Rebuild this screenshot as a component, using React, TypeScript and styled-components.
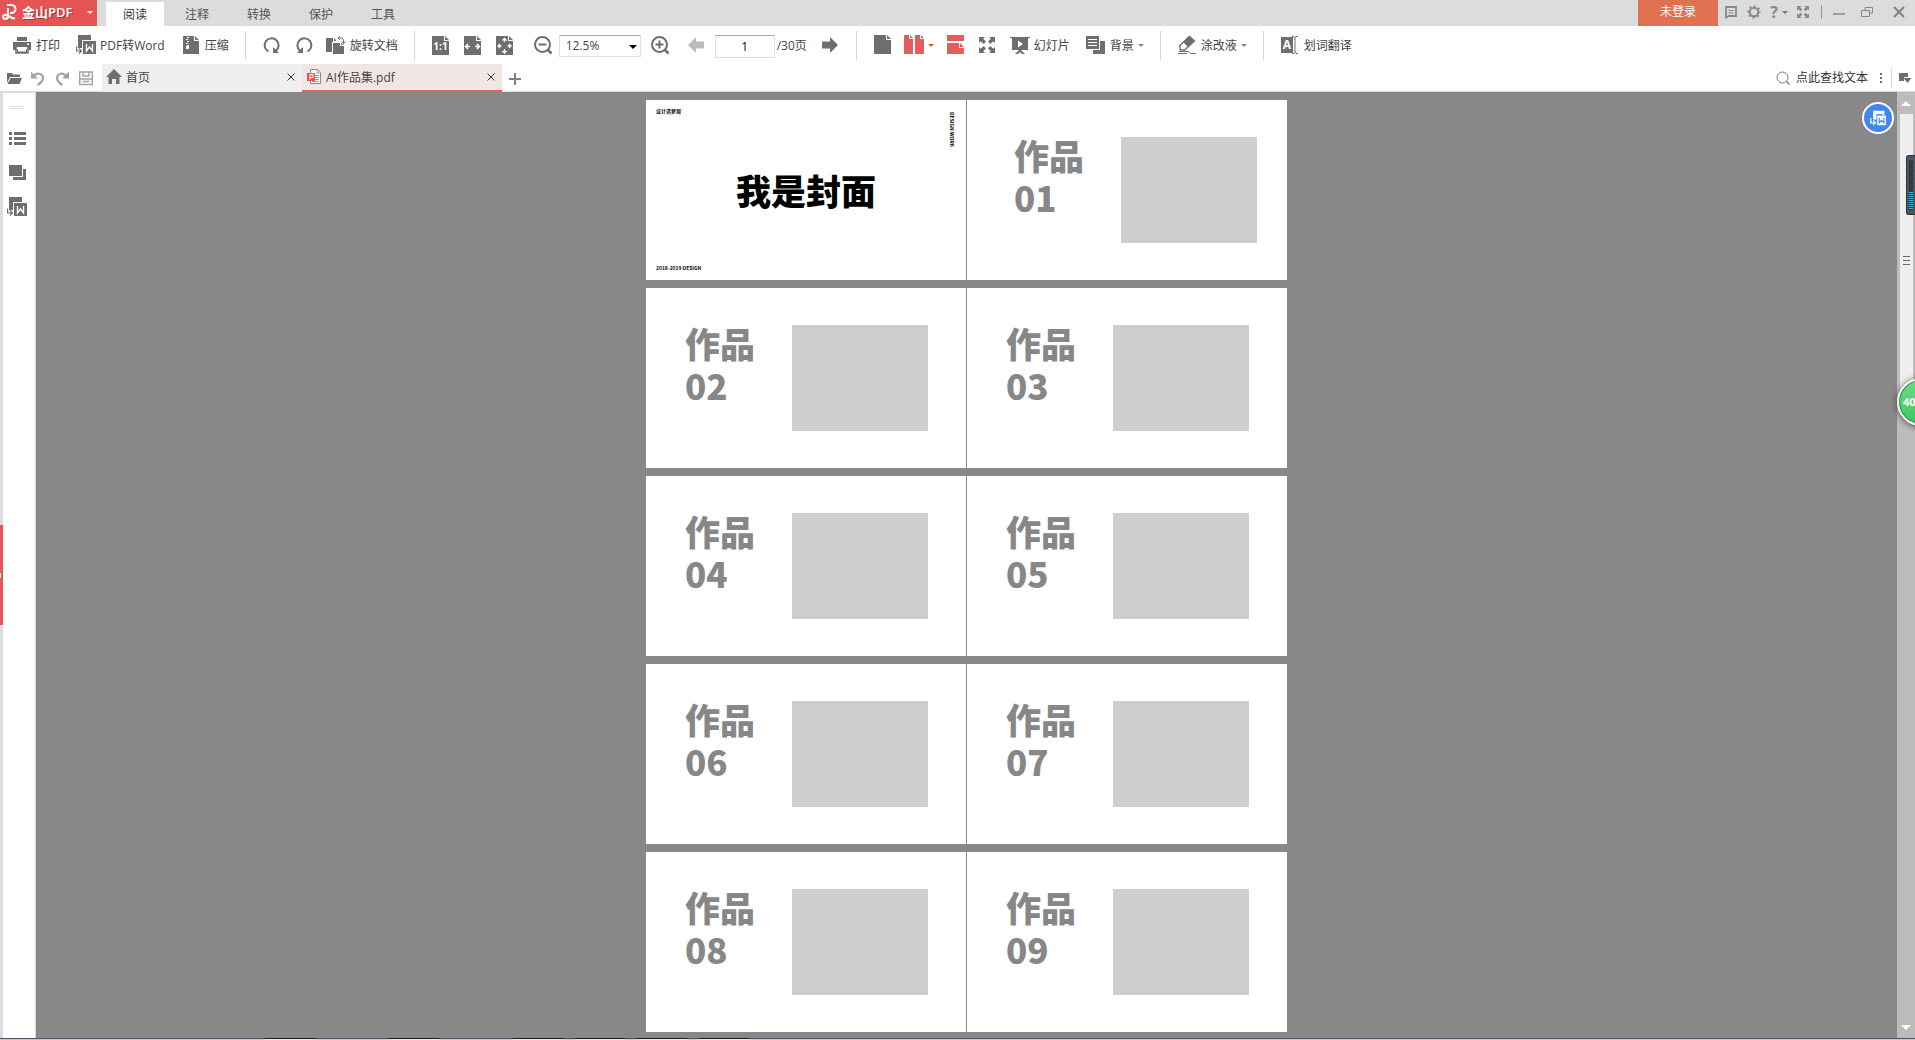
import React from "react";
import styled, { createGlobalStyle } from "styled-components";

const INK = "#6e6e6e";
const RED = "#e65353";

const Global = createGlobalStyle`
  * { box-sizing: border-box; }
  body {
    margin: 0;
    font-family: "Open Sans", "Noto Sans CJK SC", sans-serif;
    font-size: 12px;
    line-height: 16px;
    color: #444;
  }
  button, input, select { font: inherit; color: inherit; }
`;

const Shell = styled.div`
  height: 100vh;
  display: flex;
  flex-direction: column;
  overflow: hidden;
  background: #fff;
`;

const PlainButton = styled.button`
  display: flex;
  align-items: center;
  gap: 4px;
  padding: 0;
  border: 0;
  background: none;
  white-space: nowrap;
`;
const Label = styled.span`
  padding-top: 2px;
`;

const Svg = styled.svg`
  display: block;
  flex: none;
  overflow: visible;
`;

/* Title bar */
const TitleBar = styled.header`
  flex: none;
  height: 26px;
  display: flex;
  background: #dcdcdc;
`;
const Brand = styled(PlainButton)`
  width: 97px;
  padding: 0 4px 2px 2px;
  background: ${RED};
  color: #fff;
  font-size: 13px;
  font-weight: 600;
`;
const BrandName = styled.span`
  flex: 1;
  text-align: left;
  text-shadow: 1px 1px 0 #a03c3c;
`;
const Menu = styled.nav`
  flex: 1;
  display: flex;
  gap: 4px;
  padding: 2px 0 0 9px;
`;
const MenuTab = styled.button<{ $active?: boolean }>`
  width: 58px;
  padding: 2px 0 0;
  border: 0;
  background: ${(p) => (p.$active ? "#fff" : "transparent")};
  color: ${(p) => (p.$active ? "#333" : "#555")};
`;
const Login = styled.button`
  width: 80px;
  padding: 0 0 2px;
  border: 0;
  background: #e07252;
  color: #fff;
`;
const WindowTools = styled.div`
  display: flex;
  align-items: center;
  gap: 9px;
  padding: 0 0 2px 6px;
`;
const WindowControls = styled(WindowTools)`
  gap: 16px;
  padding: 0 10px 2px 8px;
`;
const Rule = styled.span<{ $h: number; $m: number; $dark?: boolean }>`
  flex: none;
  width: 1px;
  height: ${(p) => p.$h}px;
  margin: 0 ${(p) => p.$m}px;
  background: ${(p) => (p.$dark ? "#999" : "#d4d4d6")};
`;

/* Tool bar */
const ToolBar = styled.div`
  flex: none;
  height: 38px;
  display: flex;
  align-items: center;
  padding-left: 12px;
`;
const Group = styled.div<{ $gap: number; $after?: number }>`
  display: flex;
  align-items: center;
  gap: ${(p) => p.$gap}px;
  margin-right: ${(p) => p.$after ?? 0}px;
`;
const ZoomField = styled.div`
  position: relative;
  width: 82px;
  margin: 2px 3px 0 0;
`;
const ZoomSelect = styled.select`
  appearance: none;
  width: 100%;
  height: 22px;
  padding: 0 0 0 6px;
  border: 1px solid #dcdfe8;
  border-top-color: #a5a5ad;
  border-radius: 1px;
  background: #fff;
`;
const FieldCaret = styled.span`
  position: absolute;
  right: 4px;
  top: 10px;
  border: 4px solid transparent;
  border-top-color: #000;
  border-bottom: 0;
  pointer-events: none;
`;
const PageInput = styled.input`
  width: 60px;
  height: 23px;
  margin-top: 2px;
  padding: 0;
  text-align: center;
  color: #000;
  border: 1px solid #dcdfe8;
  border-top-color: #a5a5ad;
  border-radius: 1px;
`;
const PageCount = styled.label`
  width: 34px;
  margin-top: 2px;
  white-space: nowrap;
`;
const Caret = styled.span<{ $color?: string }>`
  flex: none;
  border: 3px solid transparent;
  border-top-color: ${(p) => p.$color ?? "#777"};
  border-bottom: 0;
`;

/* Document tabs */
const DocBar = styled.div`
  flex: none;
  height: 28px;
  display: flex;
  border-bottom: 1px solid #dcdcdc;
`;
const QuickTools = styled.div`
  display: flex;
  align-items: center;
  gap: 8px;
  padding: 0 8px 0 6px;
`;
const DocTab = styled.div<{ $active?: boolean }>`
  width: 200px;
  display: flex;
  align-items: center;
  gap: 4px;
  padding: 0 6px 0 4px;
  background: ${(p) => (p.$active ? "#f1e6e4" : "#eeeeee")};
  border-bottom: 2px solid ${(p) => (p.$active ? "#e65f5f" : "#eeeeee")};
  margin-bottom: -1px;
`;
const DocName = styled(PlainButton)`
  flex: 1;
`;
const Search = styled.div`
  margin-left: auto;
  display: flex;
  align-items: center;
  gap: 6px;
  padding-right: 3px;
`;
const SearchInput = styled.input`
  width: 75px;
  padding: 0;
  border: 0;
  outline: 0;
  background: none;
  &::placeholder { color: #333; opacity: 1; }
`;

/* Work area */
const Work = styled.div`
  flex: 1;
  min-height: 0;
  display: flex;
  position: relative;
`;
const EdgeStrip = styled.div`
  width: 3px;
  display: flex;
  flex-direction: column;
  justify-content: center;
  padding-top: 20px;
  background: #dcdce0;
`;
const EdgeHandle = styled.button`
  width: 3px;
  height: 100px;
  padding: 0;
  border: 0;
  background: linear-gradient(#fff, #fff) 0 48px / 1px 5px no-repeat, #e65454;
`;
const SideBar = styled.aside`
  width: 33px;
  display: flex;
  flex-direction: column;
  gap: 14px;
  padding: 13px 0 0 4px;
  border-top: 1px solid #dcdcdc;
  border-right: 1px solid #dcdcdc;
`;
const Grip = styled.span`
  width: 15px;
  height: 3px;
  margin: 0 0 6px 2px;
  border: 1px solid #dddde4;
  border-width: 1px 0;
`;
const Canvas = styled.main`
  flex: 1;
  overflow: hidden;
  background: #888;
  padding: 8px 0 6px;
`;
const Pages = styled.div`
  display: grid;
  grid-template-columns: 320px 320px;
  grid-auto-rows: 180px;
  gap: 8px 1px;
  justify-content: center;
`;
const Page = styled.section`
  background: #fff;
  display: flex;
  font-family: "Noto Sans CJK SC", sans-serif;
`;
const WorkPage = styled(Page)<{ $indent: number }>`
  align-items: flex-start;
  padding: 34px 0 0 ${(p) => p.$indent}px;
`;
const WorkTitle = styled.h2`
  width: 107px;
  margin: 0;
  color: #878787;
  font-size: 35px;
  line-height: 42px;
  font-weight: 900;
`;
const Placeholder = styled.div`
  width: 136px;
  height: 106px;
  margin-top: 3px;
  background: #cecece;
`;
const Cover = styled(Page)`
  position: relative;
  flex-direction: column;
  justify-content: space-between;
  padding: 7px 10px 8px;
  color: #000;
  font-size: 5px;
  line-height: 8px;
  font-weight: 700;
`;
const CoverTitle = styled.h1`
  margin: 0;
  text-align: center;
  font-size: 35px;
  line-height: 42px;
  font-weight: 900;
`;
const CoverSide = styled.span`
  position: absolute;
  top: 12px;
  right: 10px;
  writing-mode: vertical-rl;
`;

/* Scroll bar and floating widgets */
const ScrollTrack = styled.div`
  width: 18px;
  display: flex;
  flex-direction: column;
  align-items: center;
  background: #bcbcbc;
`;
const ScrollArrow = styled.button<{ $down?: boolean }>`
  width: 18px;
  height: 22px;
  display: grid;
  place-items: center;
  padding: 0;
  border: 0;
  background: none;
  &::after {
    content: "";
    border: 5px solid transparent;
    border-${(p) => (p.$down ? "top" : "bottom")}-color: #fff;
    border-${(p) => (p.$down ? "bottom" : "top")}: 0;
  }
`;
const Thumb = styled.div`
  width: 13px;
  height: 31%;
  margin-bottom: auto;
  display: grid;
  align-content: center;
  justify-content: center;
  gap: 3px;
  background: #eee;
`;
const ThumbLine = styled.i`
  width: 7px;
  height: 1px;
  background: #666;
`;
const ConvertFab = styled.button`
  position: absolute;
  top: 10px;
  right: 21px;
  width: 32px;
  height: 32px;
  display: grid;
  place-items: center;
  padding: 0;
  border: 2px solid #fff;
  border-radius: 50%;
  background: #4286f0;
`;
const Meter = styled.div`
  position: absolute;
  top: 63px;
  right: 0;
  width: 9px;
  height: 60px;
  padding: 4px 2px;
  border: 1px solid #2f343a;
  border-right: 0;
  border-radius: 3px 0 0 3px;
  background: #4a545e;
`;
const MeterFill = styled.div`
  height: 100%;
  background:
    repeating-linear-gradient(transparent 0 1px, #2b3138 1px 2px),
    linear-gradient(#3c4650 62%, #3fb4ea 62%);
`;
const SpeedBall = styled.button`
  position: absolute;
  top: 286px;
  right: -30px;
  width: 48px;
  height: 48px;
  padding: 0 0 0 4px;
  text-align: left;
  border: 2px solid #f4f4f4;
  border-radius: 50%;
  background: linear-gradient(#6fdc85, #3ec463);
  box-shadow: inset 0 0 0 1px #178a52, 0 1px 6px #444;
  color: #fff;
  font-size: 11px;
  font-weight: 700;
`;
const TaskEdge = styled.footer`
  flex: none;
  height: 2px;
  display: flex;
  gap: 12px;
  padding-left: 265px;
  border-top: 1px solid #46546a;
  background: #bccbdc;
`;
const TaskItem = styled.i<{ $gap?: number }>`
  width: 50px;
  height: 2px;
  margin: -1px ${(p) => p.$gap ?? 0}px 0 0;
  background: linear-gradient(#171520 50%, #eceaf3 50%);
`;

type IconProps = { w?: number; h?: number; children: React.ReactNode; color?: string };
const Icon = ({ w = 20, h = 20, color = INK, children }: IconProps) => (
  <Svg width={w} height={h} viewBox={`0 0 ${w} ${h}`} fill={color} aria-hidden="true">
    {children}
  </Svg>
);
const line = (color = INK, width = 2) => ({ fill: "none", stroke: color, strokeWidth: width });

const Letter = ({ x, y, size, children, fill = "#fff" }: { x: number; y: number; size: number; children: string; fill?: string }) => (
  <text x={x} y={y} fontSize={size} fontWeight={700} fill={fill} textAnchor="middle" fontFamily="Open Sans, sans-serif">
    {children}
  </text>
);

const PrintIcon = () => (
  <Icon>
    <path d="M5 2h10v4H5zM1 7h18v8h-3v-3H4v3H1zM5 14h10v4H5z" />
    <path d="M6 13.500h8v3H6z" fill="#fff" />
    <path d="M4 12v6h12v-6" {...line(INK, 1.5)} />
    <path d="M15 8.500h2v1.500h-2z" fill="#fff" />
  </Icon>
);
const WordIcon = () => (
  <Icon>
    <path d="M2 0h13v5H6v8H2z" />
    <path d="M7 6h13v13H7z" />
    <path d="M10.500 9v7l3-4 3 4V9" {...line("#fff", 1.4)} />
    <path d="M.6 11.500V16H5M3 13.500L5.500 16 3 18.500" {...line(INK, 1.2)} />
  </Icon>
);
const ZipIcon = () => (
  <Icon>
    <path d="M2 1h11v5h5v13H2z" />
    <path d="M14 1l4 4h-4z" />
    <path d="M6 2h2v1H6zM5 4h2v1H5zM6 6h2v1H6zM5 8h2v1H5zM6 10h2v4H5v-3h1z" fill="#fff" />
  </Icon>
);
const RotateIcon = ({ flip = false }) => (
  <Icon>
    <g transform={flip ? "matrix(-1 0 0 1 20 0)" : undefined}>
      <path d="M6.500 16.600A7 7 0 1 1 14 15.800" {...line(INK, 2)} />
      <path d="M11 12v6h6z" />
    </g>
  </Icon>
);
const RotateDocIcon = () => (
  <Icon>
    <path d="M0 3h7v4H6v10H0zM8 3l2 2v1H8z" />
    <path d="M7 8h7v3h4v8H7zM15 8l3 2h-3z" />
    <path d="M12 3h4l1.500 2v3M14 1l-2 2 2 2M15.500 6.500l2 2 2-2" {...line(INK, 1)} />
  </Icon>
);
const Doc = ({ children }: { children?: React.ReactNode }) => (
  <g transform="translate(1 0)">
    <path d="M0 1h12v5h5v14H0zM13 1l4 4h-4z" />
    {children}
  </g>
);
const white = line("#fff", 1.5);
const ActualIcon = () => (
  <Icon h={21}><Doc><Letter x={8.5} y={15} size={10}>1:1</Letter></Doc></Icon>
);
const FitWidthIcon = () => (
  <Icon h={21}>
    <Doc><path d="M6 11.500H2M4 9l-2.500 2.500L4 14M11 11.500h4M13 9l2.500 2.500L13 14" {...white} /></Doc>
  </Icon>
);
const FitPageIcon = () => (
  <Icon h={21}>
    <Doc><path d="M5.500 11H2M4 9l-2 2 2 2M11.500 11H15M13 9l2 2-2 2M8.500 7V3.500M6.500 5.500l2-2 2 2M8.500 14v4M6.500 16l2 2 2-2" {...line("#fff", 1.300)} /></Doc>
  </Icon>
);
const MagnifyIcon = ({ plus = false }) => (
  <Icon>
    <circle cx="9.500" cy="9.500" r="7.500" {...line()} />
    <path d={plus ? "M5.500 9.500h8M9.500 5.500v8" : "M5.500 9.500h8"} {...line()} />
    <path d="M14.500 14.500l4 4" {...line(INK, 2.5)} />
  </Icon>
);
const ArrowIcon = ({ right = false }) => (
  <Icon color={right ? INK : "#bdbdbd"}>
    <path d="M2 10l8-8v4.500h8v7h-8V18z" transform={right ? "matrix(-1 0 0 1 20 0)" : undefined} />
  </Icon>
);
const SingleIcon = () => (
  <Icon w={18}><path d="M1 0h12v5h5v14H1zM14 0l4 4h-4z" /></Icon>
);
const DoubleIcon = () => (
  <Icon color="#e65c5c"><path d="M0 0h5v4h4v15H0zM6 0l3 3H6zM11 0h5v4h4v15h-9zM17 0l3 3h-3z" /></Icon>
);
const ContinuousIcon = () => (
  <Icon w={17} color="#e65c5c"><path d="M0 0h17v6H0zM0 8h12v5h5v6H0zM13 8l4 4h-4z" /></Icon>
);
const ExpandPaths = () => (
  <path d="M0 0h6L4.200 1.800 7 4.600 4.600 7 1.800 4.200 0 6zM16 0v6l-1.800-1.800L11.400 7 9 4.600l2.800-2.800L10 0zM0 16v-6l1.800 1.800L4.600 9 7 11.400l-2.800 2.800L6 16zM16 16h-6l1.800-1.800L9 11.400 11.400 9l2.800 2.800L16 10z" />
);
const ExpandIcon = () => (
  <Icon><g transform="translate(2 2)"><ExpandPaths /></g></Icon>
);
const SlidesIcon = () => (
  <Icon>
    <path d="M0 2h20v1H0zM2 3h16v12H2zM9 15h2l4 4h-3l-2-2-2 2H5z" />
    <path d="M8 5.500l5 3.500-5 3.500z" fill="#fff" />
  </Icon>
);
const BackgroundIcon = () => (
  <Icon>
    <path d="M0 1h13v13H0zM14 6h5v13H7v-4h7z" />
    <path d="M2 4.500h9M2 7.500h9M2 10.500h9" {...line("#fff", 1)} />
  </Icon>
);
const EraserIcon = () => (
  <Icon>
    <path d="M12 1l5 5-6 6-5-5z" />
    <path d="M12.500 1.500L2.500 11l1 4h4L17.500 6z" {...line(INK, 1.4)} />
    <path d="M2 16.500h9c2 0 1 2 3 2h5M1 18.500h9" {...line(INK, 1)} />
  </Icon>
);
const TranslateIcon = () => (
  <Icon>
    <path d="M1 2h12v16H1z" />
    <Letter x={7} y={14} size={12}>A</Letter>
    <path d="M12 1.500h2l1 1 1-1h2M12 18.500h2l1-1 1 1h2M15 2v16" {...line(INK, 1)} />
  </Icon>
);

const Tool = ({ icon, label, caret, title }: { icon: React.ReactNode; label?: string; caret?: string; title?: string }) => (
  <PlainButton type="button" aria-label={label ?? title}>
    {icon}
    {label && <Label>{label}</Label>}
    {caret && <Caret $color={caret} />}
  </PlainButton>
);

const CloseIcon = () => (
  <Icon w={10} h={10}><path d="M1.500 1.500l7 7M8.500 1.500l-7 7" {...line("#333", 1)} /></Icon>
);

const works = ["01", "02", "03", "04", "05", "06", "07", "08", "09"];

export default function App() {
  return (
    <Shell>
      <Global />
      <TitleBar>
        <Brand type="button">
          <Icon w={16} h={18}>
            <path d="M5 2h4c6 0 6 8 0 8H8M6 5v8.500c0 3-5 3-5 .5s3-2.500 5-1.500 4 3.500 7 3" {...line("#fff", 2)} />
          </Icon>
          <BrandName>金山PDF</BrandName>
          <Caret $color="#fff" />
        </Brand>
        <Menu>
          {["阅读", "注释", "转换", "保护", "工具"].map((name, i) => (
            <MenuTab key={name} type="button" $active={i === 0}>{name}</MenuTab>
          ))}
        </Menu>
        <Login type="button">未登录</Login>
        <WindowTools>
          <Tool title="消息" icon={<Icon w={14} h={14} color="#888"><path d="M2 2h10v9H5l-3 1.500z" {...line("#888", 1.8)} /><path d="M4.500 5h5v1h-5zM4.500 7.500h5v1h-5z" /></Icon>} />
          <Tool title="设置" icon={<Icon w={14} h={14}><circle cx="7" cy="7" r="4.200" {...line("#888", 2)} /><circle cx="7" cy="7" r="5.800" fill="none" stroke="#888" strokeWidth="1.600" strokeDasharray="2.300 2.255" strokeDashoffset="1.150" /></Icon>} />
          <Tool title="帮助" icon={<Icon w={8} h={14}><Letter x={4} y={13} size={16} fill="#888">?</Letter></Icon>} caret="#777" />
          <Tool title="全屏" icon={<Icon w={12} h={12} color="#888"><g transform="scale(.75)"><ExpandPaths /></g></Icon>} />
          <Rule $h={14} $m={3} $dark />
        </WindowTools>
        <WindowControls>
          <Tool title="最小化" icon={<Icon w={12} h={12}><path d="M0 8h12" {...line("#888", 1.5)} /></Icon>} />
          <Tool title="还原" icon={<Icon w={16} h={12}><path d="M4 4V1.500h7.500V7H9M.5 4.500h8v6h-8z" {...line("#888", 1)} /></Icon>} />
          <Tool title="关闭" icon={<Icon w={12} h={12}><path d="M1 1l10 10M11 1L1 11" {...line("#808080", 2)} /></Icon>} />
        </WindowControls>
      </TitleBar>

      <ToolBar>
        <Group $gap={16}>
          <Tool icon={<PrintIcon />} label="打印" />
          <Tool icon={<WordIcon />} label="PDF转Word" />
          <Tool icon={<ZipIcon />} label="压缩" />
        </Group>
        <Rule $h={29} $m={16} />
        <Group $gap={12}>
          <Tool icon={<RotateIcon />} title="顺时针旋转" />
          <Tool icon={<RotateIcon flip />} title="逆时针旋转" />
          <Tool icon={<RotateDocIcon />} label="旋转文档" />
        </Group>
        <Rule $h={29} $m={16} />
        <Group $gap={12} $after={18}>
          <Tool icon={<ActualIcon />} title="实际大小" />
          <Tool icon={<FitWidthIcon />} title="适合宽度" />
          <Tool icon={<FitPageIcon />} title="适合页面" />
        </Group>
        <Group $gap={6} $after={16}>
          <Tool icon={<MagnifyIcon />} title="缩小" />
          <ZoomField>
            <ZoomSelect aria-label="缩放比例" defaultValue="12.5%">
              <option>12.5%</option>
            </ZoomSelect>
            <FieldCaret />
          </ZoomField>
          <Tool icon={<MagnifyIcon plus />} title="放大" />
        </Group>
        <Group $gap={9}>
          <Tool icon={<ArrowIcon />} title="上一页" />
          <Group $gap={2}>
            <PageInput id="page" defaultValue="1" />
            <PageCount htmlFor="page">/30页</PageCount>
          </Group>
          <Tool icon={<ArrowIcon right />} title="下一页" />
        </Group>
        <Rule $h={29} $m={16} />
        <Group $gap={13} $after={16}>
          <Tool icon={<SingleIcon />} title="单页" />
          <Tool icon={<DoubleIcon />} title="双页" caret="#d0641c" />
          <Tool icon={<ContinuousIcon />} title="连续" />
          <Tool icon={<ExpandIcon />} title="全屏" />
          <Tool icon={<SlidesIcon />} label="幻灯片" />
        </Group>
        <Tool icon={<BackgroundIcon />} label="背景" caret="#888" />
        <Rule $h={29} $m={16} />
        <Tool icon={<EraserIcon />} label="涂改液" caret="#888" />
        <Rule $h={29} $m={16} />
        <Tool icon={<TranslateIcon />} label="划词翻译" />
      </ToolBar>

      <DocBar>
        <QuickTools>
          <Tool title="打开" icon={<Icon w={16} h={16}><path d="M1 3h5l1 1.500h7V7H4l-3 6zM4.500 8H16l-2.500 6H1.500z" /></Icon>} />
          <Tool title="撤销" icon={<Icon w={16} h={16}><path d="M4 5.500C8 2 13 4 13 8c0 3-2 5-5.500 7" {...line("#a3a3a3", 2.200)} /><path d="M1 1.500v7h7z" fill="#a3a3a3" /></Icon>} />
          <Tool title="重做" icon={<Icon w={16} h={16}><path d="M12 5.500C8 2 3 4 3 8c0 3 2 5 5.500 7" {...line("#a3a3a3", 2.200)} /><path d="M15 1.500v7H8z" fill="#a3a3a3" /></Icon>} />
          <Tool title="保存" icon={<Icon w={16} h={16}><path d="M1.700 2h12.600v12.500H1.700zM5 2v4h6V2M2 9h12M4.500 11.500h7" {...line("#a3a3a3", 1.4)} /></Icon>} />
        </QuickTools>
        <DocTab>
          <DocName type="button">
            <Icon w={16} h={18}><path d="M8 1l8 8h-2.500v7H10v-5H6v5H2.500V9H0z" /></Icon>
            <Label>首页</Label>
          </DocName>
          <Tool title="关闭首页" icon={<CloseIcon />} />
        </DocTab>
        <DocTab $active>
          <DocName type="button">
            <Icon w={16} h={18}>
              <path d="M4.500 1.500h7l3 3v11h-10z" fill="#fff" stroke="#888" />
              <path d="M11 2v3h3M9 7.500h4M9 9.500h4M9 11.500h4M6 13.500h7" {...line("#999", 1)} />
              <path d="M1 5h8v8H1z" fill={RED} />
              <path d="M4 11.500v-5h3v3H3" {...line("#fff", 1)} />
            </Icon>
            <Label>AI作品集.pdf</Label>
          </DocName>
          <Tool title="关闭文档" icon={<CloseIcon />} />
        </DocTab>
        <Tool title="新建标签" icon={<Icon h={20} w={26}><path d="M7 11h12M13 5v12" {...line("#808080", 2)} /></Icon>} />
        <Search>
          <Icon w={14} h={14}><circle cx="6.500" cy="6.500" r="5.500" {...line("#777", 1)} /><path d="M10.500 10.500l3 3" {...line("#777", 1.2)} /></Icon>
          <SearchInput aria-label="查找文本" placeholder="点此查找文本" />
          <Tool title="更多" icon={<Icon w={8} h={12}><path d="M3 1h2v2H3zM3 5h2v2H3zM3 9h2v2H3z" /></Icon>} />
          <Rule $h={20} $m={0} />
          <Tool title="面板" icon={<Icon w={14} h={14}><path d="M1 2h9v4H6v4H1z" /><path d="M5.500 7h8l-4 5z" /></Icon>} />
        </Search>
      </DocBar>

      <Work>
        <EdgeStrip><EdgeHandle type="button" aria-label="展开侧栏" /></EdgeStrip>
        <SideBar>
          <Grip />
          <Tool title="目录" icon={<Icon><path d="M2 3h3v3H2zM7 3h12v3H7zM2 8h3v3H2zM7 8h12v3H7zM2 13h3v3H2zM7 13h12v3H7z" /></Icon>} />
          <Tool title="缩略图" icon={<Icon><path d="M2 2h13v11H2zM16 6h3v11H6v-3h10z" /></Icon>} />
          <Tool title="转换" icon={<WordIcon />} />
        </SideBar>
        <Canvas>
          <Pages>
            <Cover>
              <span>设计造梦周</span>
              <CoverTitle>我是封面</CoverTitle>
              <span>2018-2019 DESIGN</span>
              <CoverSide>DESIGN WORK</CoverSide>
            </Cover>
            {works.map((no, i) => (
              <WorkPage key={no} $indent={i === 0 ? 47 : 39}>
                <WorkTitle>作品<br />{no}</WorkTitle>
                <Placeholder />
              </WorkPage>
            ))}
          </Pages>
        </Canvas>
        <ScrollTrack>
          <ScrollArrow type="button" aria-label="向上滚动" />
          <Thumb><ThumbLine /><ThumbLine /><ThumbLine /></Thumb>
          <ScrollArrow type="button" aria-label="向下滚动" $down />
        </ScrollTrack>
        <ConvertFab type="button" aria-label="转换为Word">
          <Svg width="16" height="16" viewBox="0 0 20 20" fill="#fff">
            <path d="M4 1h14v5h-3V5H8v7H4zM9 7h11v12H9z" />
            <path d="M11.500 10v6l3-3 3 3v-6" {...line("#4286f0", 1.5)} />
            <path d="M1 10v6h4M4 13l3 3-3 3" {...line("#fff", 1.5)} />
          </Svg>
        </ConvertFab>
        <Meter><MeterFill /></Meter>
        <SpeedBall type="button">40</SpeedBall>
      </Work>
      <TaskEdge>
        <TaskItem $gap={62} /><TaskItem $gap={62} /><TaskItem /><TaskItem /><TaskItem /><TaskItem />
      </TaskEdge>
    </Shell>
  );
}
